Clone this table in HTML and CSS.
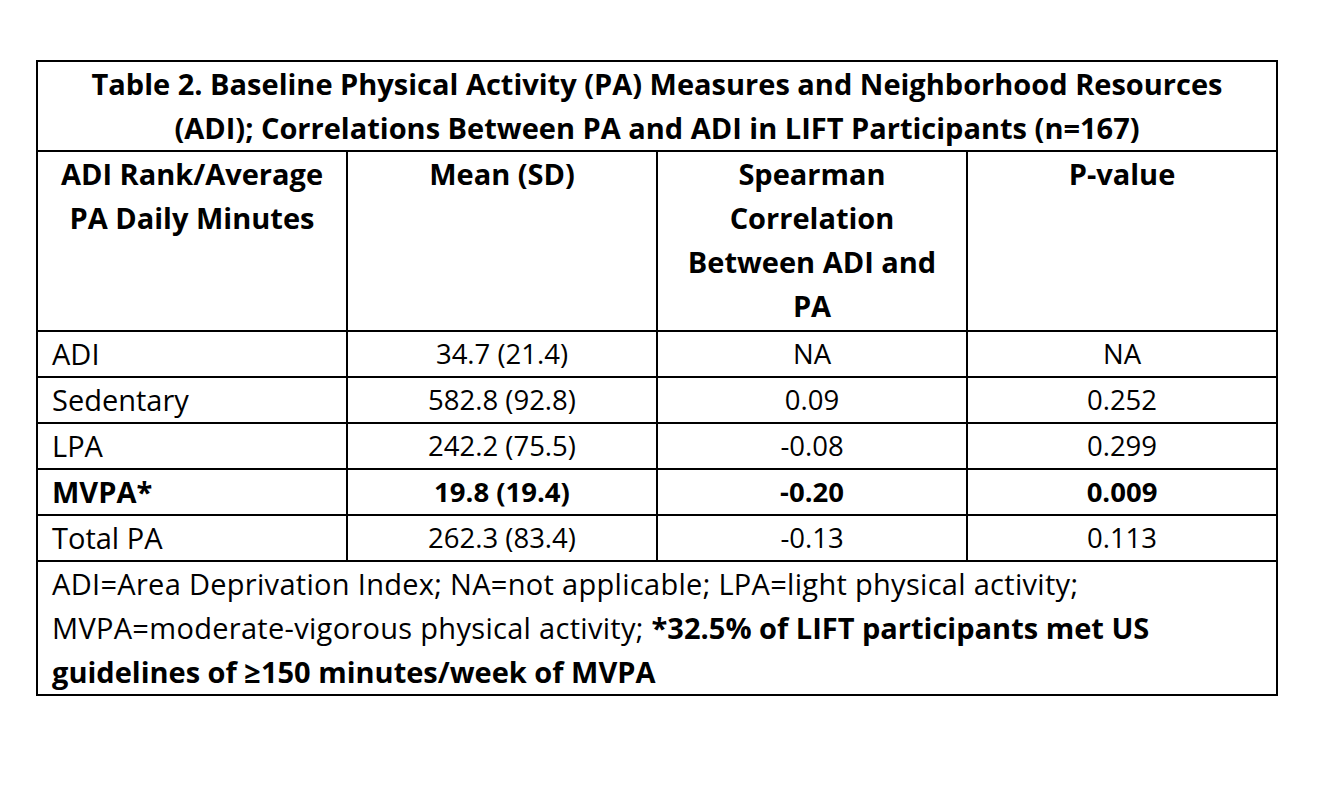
FILE: index.html
```html
<!DOCTYPE html>
<html>
<head>
<meta charset="utf-8">
<link rel="stylesheet" href="styles.css">
</head>
<body>
<table class="tbl">
  <colgroup><col class="c"><col class="c"><col class="c"><col class="c"></colgroup>
  <tr><td colspan="4" class="title">Table 2. Baseline Physical Activity (PA) Measures and Neighborhood Resources<br>(ADI); Correlations Between PA and ADI in LIFT Participants (n=167)</td></tr>
  <tr class="head">
    <td>ADI Rank/Average<br>PA Daily Minutes</td>
    <td>Mean (SD)</td>
    <td>Spearman<br>Correlation<br>Between ADI and<br>PA</td>
    <td>P-value</td>
  </tr>
  <tr class="row"><td class="lbl">ADI</td><td class="num">34.7 (21.4)</td><td class="num">NA</td><td class="num">NA</td></tr>
  <tr class="row"><td class="lbl">Sedentary</td><td class="num">582.8 (92.8)</td><td class="num">0.09</td><td class="num">0.252</td></tr>
  <tr class="row"><td class="lbl">LPA</td><td class="num">242.2 (75.5)</td><td class="num">-0.08</td><td class="num">0.299</td></tr>
  <tr class="row bold"><td class="lbl">MVPA*</td><td class="num">19.8 (19.4)</td><td class="num">-0.20</td><td class="num">0.009</td></tr>
  <tr class="row"><td class="lbl">Total PA</td><td class="num">262.3 (83.4)</td><td class="num">-0.13</td><td class="num">0.113</td></tr>
  <tr><td colspan="4" class="foot">ADI=Area Deprivation Index; NA=not applicable; LPA=light physical activity;<br>MVPA=moderate-vigorous physical activity; <b>*32.5% of LIFT participants met US<br>guidelines of ≥150 minutes/week of MVPA</b></td></tr>
</table>
</body>
</html>
```
FILE: styles.css
```css
html, body { margin: 0; padding: 0; background: #fff; }
body { padding: 60px 0 0 36px; font-family: "Open Sans", "Liberation Sans", sans-serif; color: #000; }
.tbl { border-collapse: collapse; width: 1242px; table-layout: fixed; font-size: 29px; line-height: 44px; }
.tbl td { border: 2px solid #000; padding: 0 14px; vertical-align: top; white-space: nowrap; }
.title { font-weight: 700; text-align: center; padding: 0 !important; }
.head td { font-weight: 700; text-align: center; padding: 0 0 2px; }
.row td { text-align: center; }
.row td.lbl { text-align: left; }
.row td.num { font-size: 27.5px; }
.row.bold td { font-weight: 700; }
.foot { text-align: left; letter-spacing: 0.3px; }
.foot b { font-weight: 700; letter-spacing: 0; }
```
